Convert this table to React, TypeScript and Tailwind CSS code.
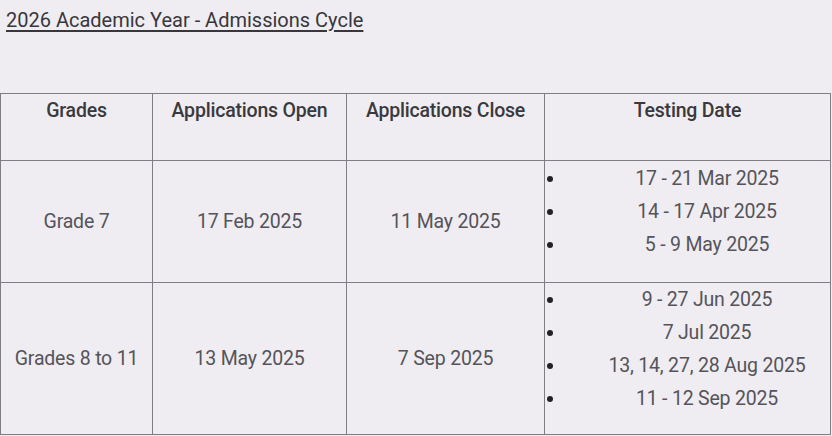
const rows = [
  {
    grade: "Grade 7",
    open: "17 Feb 2025",
    close: "11 May 2025",
    dates: ["17 - 21 Mar 2025", "14 - 17 Apr 2025", "5 - 9 May 2025"],
    h: "h-[122px]",
    pt: "pt-[1px]",
  },
  {
    grade: "Grades 8 to 11",
    open: "13 May 2025",
    close: "7 Sep 2025",
    dates: ["9 - 27 Jun 2025", "7 Jul 2025", "13, 14, 27, 28 Aug 2025", "11 - 12 Sep 2025"],
    h: "h-[152px]",
    pt: "pt-0",
  },
];

export default function App() {
  return (
    <div className="h-[436px] w-[832px] overflow-hidden bg-[#efedf1] font-['Roboto',sans-serif] text-[#55545a]">
      <h2 className="pl-[6px] pt-[8px] text-[20px] leading-[24px] text-[#38373c] underline underline-offset-[3px]">
        2026 Academic Year - Admissions Cycle
      </h2>
      <table className="mt-[61px] w-[831px] table-fixed border-collapse text-[19.5px] tracking-[-0.2px]">
        <colgroup>
          <col className="w-[152px]" />
          <col className="w-[194px]" />
          <col className="w-[198px]" />
          <col />
        </colgroup>
        <thead>
          <tr className="h-[67px]">
            {["Grades", "Applications Open", "Applications Close", "Testing Date"].map((t) => (
              <th
                key={t}
                className="border border-[#807e84] px-1 pt-[4px] align-top text-[19.5px] font-medium leading-[26px] text-[#3a393e]"
              >
                {t}
              </th>
            ))}
          </tr>
        </thead>
        <tbody>
          {rows.map((r) => (
            <tr key={r.grade} className={r.h}>
              <td className="border border-[#807e84] text-center">{r.grade}</td>
              <td className="border border-[#807e84] text-center">{r.open}</td>
              <td className="border border-[#807e84] text-center">{r.close}</td>
              <td className="border border-[#807e84] p-0 align-top">
                <ul className={`pb-[17px] pr-[4px] ${r.pt}`}>
                  {r.dates.map((d) => (
                    <li key={d} className="flex items-center leading-[33px]">
                      <span className="flex w-[43px] shrink-0 pl-[2px]">
                        <span className="h-[6px] w-[6px] rounded-full bg-[#222]" />
                      </span>
                      <span className="flex-1 text-center">{d}</span>
                    </li>
                  ))}
                </ul>
              </td>
            </tr>
          ))}
        </tbody>
      </table>
    </div>
  );
}
